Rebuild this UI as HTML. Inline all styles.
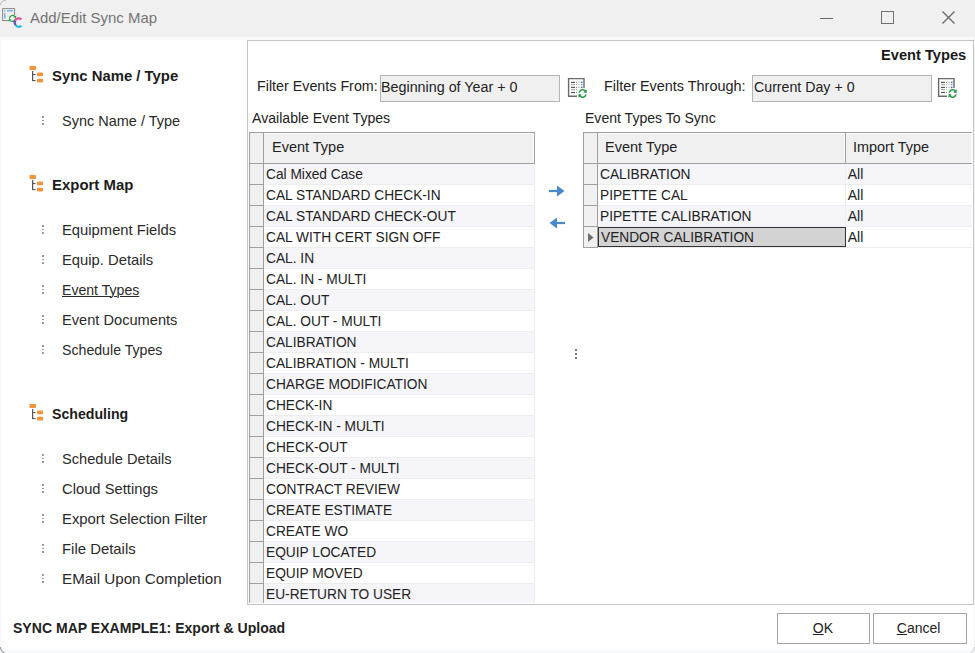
<!DOCTYPE html>
<html><head><meta charset="utf-8">
<style>
*{margin:0;padding:0;box-sizing:border-box}
html,body{width:975px;height:653px;overflow:hidden;background:#fff;font-family:"Liberation Sans",sans-serif;position:relative}
.a{position:absolute;white-space:nowrap}
</style></head><body>
<div class="a" style="left:0;top:0;width:975px;height:37px;background:#f0f0f0"></div>
<div class="a" style="left:0;top:37px;width:975px;height:3px;background:#f8f9fa"></div>
<div class="a" style="left:0;top:37px;width:2px;height:616px;background:#f8f9fa"></div>
<div class="a" style="left:0;top:650px;width:975px;height:3px;background:#f8f9fa"></div>
<div class="a" style="left:974px;top:37px;width:1px;height:616px;background:#f3f4f5"></div>
<svg class="a" style="left:0;top:0" width="10" height="10"><path d="M0.3 5 Q1 1 6 0.3" fill="none" stroke="#b8b8b8" stroke-width="1"/></svg>
<svg class="a" style="left:0;top:646px" width="6" height="7"><path d="M0.3 1 Q1 5.5 4.5 6.8" fill="none" stroke="#9a9a9a" stroke-width="1.2"/></svg>
<svg class="a" style="left:969px;top:646px" width="6" height="7"><path d="M5.7 1 Q5 5.5 1.5 6.8" fill="none" stroke="#c4c4c4" stroke-width="1"/></svg>
<svg class="a" style="left:0;top:0" width="28" height="36" viewBox="0 0 28 36">
 <path d="M9 20.6 H2.6 V8.6 H14.6 V15" fill="none" stroke="#7c7c7c" stroke-width="0.9"/>
 <rect x="4.1" y="10.1" width="1.4" height="1.4" fill="#79aee6"/>
 <rect x="7" y="10.1" width="6" height="1.4" fill="#79aee6"/>
 <rect x="4.1" y="13" width="1.4" height="5.6" fill="#79aee6"/>
 <path d="M9.4 18.6 A3.1 3.1 0 0 1 14.9 16.6" fill="none" stroke="#1f9d3d" stroke-width="1.1"/>
 <path d="M16.4 15.4 L15.9 18.6 L13.6 17.0 Z" fill="#1f9d3d"/>
 <path d="M15.4 18.6 A3.1 3.1 0 0 1 10.3 20.6" fill="none" stroke="#1f9d3d" stroke-width="1.1"/>
 <path d="M8.6 21.6 L9.0 18.6 L11.3 20.0 Z" fill="#1f9d3d"/>
 <path d="M21.4 19.4 A3.9 3.9 0 0 0 15.22 20.65" fill="none" stroke="#e3529b" stroke-width="2.2"/>
 <path d="M15.22 20.65 A3.9 3.9 0 0 0 15.61 25.1" fill="none" stroke="#6b4bb0" stroke-width="2.2"/>
 <path d="M15.61 25.1 A3.9 3.9 0 0 0 21.4 25.8" fill="none" stroke="#22b9e0" stroke-width="2.2"/>
</svg>
<div class="a" style="left:29.50px;top:10.04px;font-size:15px;line-height:15px;font-weight:400;color:#747474;transform:scaleX(0.9959);transform-origin:0 0;">Add/Edit Sync Map</div>
<div class="a" style="left:820px;top:18px;width:13px;height:1px;background:#6a6a6a"></div>
<div class="a" style="left:881px;top:11px;width:13px;height:13px;border:1px solid #707070"></div>
<svg class="a" style="left:941px;top:10px" width="16" height="16" viewBox="0 0 16 16"><path d="M1.5 1.5 L13.5 13.5 M13.5 1.5 L1.5 13.5" stroke="#6a6a6a" stroke-width="1.4"/></svg>
<svg class="a" style="left:29px;top:66px" width="15" height="17" viewBox="0 0 15 17"><rect x="0.5" y="0" width="6.5" height="4" rx="0.8" fill="#f2943a"/><rect x="3" y="5" width="1.2" height="10" fill="#55555f"/><rect x="3" y="8" width="3.5" height="1.1" fill="#55555f"/><rect x="3" y="14" width="3.5" height="1.1" fill="#55555f"/><rect x="8" y="6.5" width="6" height="3.7" rx="0.8" fill="#f2943a"/><rect x="8" y="12.7" width="6" height="3.7" rx="0.8" fill="#f2943a"/></svg>
<div class="a" style="left:52.20px;top:68.14px;font-size:15px;line-height:15px;font-weight:700;color:#1c1c1c;transform:scaleX(0.9915);transform-origin:0 0;">Sync Name / Type</div>
<svg class="a" style="left:29px;top:175px" width="15" height="17" viewBox="0 0 15 17"><rect x="0.5" y="0" width="6.5" height="4" rx="0.8" fill="#f2943a"/><rect x="3" y="5" width="1.2" height="10" fill="#55555f"/><rect x="3" y="8" width="3.5" height="1.1" fill="#55555f"/><rect x="3" y="14" width="3.5" height="1.1" fill="#55555f"/><rect x="8" y="6.5" width="6" height="3.7" rx="0.8" fill="#f2943a"/><rect x="8" y="12.7" width="6" height="3.7" rx="0.8" fill="#f2943a"/></svg>
<div class="a" style="left:51.60px;top:177.24px;font-size:15px;line-height:15px;font-weight:700;color:#1c1c1c;transform:scaleX(0.9955);transform-origin:0 0;">Export Map</div>
<svg class="a" style="left:29px;top:404px" width="15" height="17" viewBox="0 0 15 17"><rect x="0.5" y="0" width="6.5" height="4" rx="0.8" fill="#f2943a"/><rect x="3" y="5" width="1.2" height="10" fill="#55555f"/><rect x="3" y="8" width="3.5" height="1.1" fill="#55555f"/><rect x="3" y="14" width="3.5" height="1.1" fill="#55555f"/><rect x="8" y="6.5" width="6" height="3.7" rx="0.8" fill="#f2943a"/><rect x="8" y="12.7" width="6" height="3.7" rx="0.8" fill="#f2943a"/></svg>
<div class="a" style="left:52.22px;top:406.34px;font-size:15px;line-height:15px;font-weight:700;color:#1c1c1c;transform:scaleX(0.9419);transform-origin:0 0;">Scheduling</div>
<div class="a" style="left:42px;top:116px;width:1.7px;height:1.6px;background:#9c9c9c"></div>
<div class="a" style="left:42px;top:119.5px;width:1.7px;height:1.6px;background:#9c9c9c"></div>
<div class="a" style="left:42px;top:123px;width:1.7px;height:1.6px;background:#9c9c9c"></div>
<div class="a" style="left:62.22px;top:113.44px;font-size:15px;line-height:15px;font-weight:400;color:#2a2a2a;transform:scaleX(0.9662);transform-origin:0 0;">Sync Name / Type</div>
<div class="a" style="left:42px;top:225px;width:1.7px;height:1.6px;background:#9c9c9c"></div>
<div class="a" style="left:42px;top:228.5px;width:1.7px;height:1.6px;background:#9c9c9c"></div>
<div class="a" style="left:42px;top:232px;width:1.7px;height:1.6px;background:#9c9c9c"></div>
<div class="a" style="left:61.62px;top:222.24px;font-size:15px;line-height:15px;font-weight:400;color:#2a2a2a;transform:scaleX(0.9856);transform-origin:0 0;">Equipment Fields</div>
<div class="a" style="left:42px;top:255px;width:1.7px;height:1.6px;background:#9c9c9c"></div>
<div class="a" style="left:42px;top:258.5px;width:1.7px;height:1.6px;background:#9c9c9c"></div>
<div class="a" style="left:42px;top:262px;width:1.7px;height:1.6px;background:#9c9c9c"></div>
<div class="a" style="left:61.62px;top:252.24px;font-size:15px;line-height:15px;font-weight:400;color:#2a2a2a;transform:scaleX(0.9857);transform-origin:0 0;">Equip. Details</div>
<div class="a" style="left:42px;top:285px;width:1.7px;height:1.6px;background:#9c9c9c"></div>
<div class="a" style="left:42px;top:288.5px;width:1.7px;height:1.6px;background:#9c9c9c"></div>
<div class="a" style="left:42px;top:292px;width:1.7px;height:1.6px;background:#9c9c9c"></div>
<div class="a" style="left:61.67px;top:282.24px;font-size:15px;line-height:15px;font-weight:400;color:#2a2a2a;transform:scaleX(0.9395);transform-origin:0 0;"><span style="text-decoration:underline;text-decoration-thickness:1px;text-underline-offset:1px">Event Types</span></div>
<div class="a" style="left:42px;top:315px;width:1.7px;height:1.6px;background:#9c9c9c"></div>
<div class="a" style="left:42px;top:318.5px;width:1.7px;height:1.6px;background:#9c9c9c"></div>
<div class="a" style="left:42px;top:322px;width:1.7px;height:1.6px;background:#9c9c9c"></div>
<div class="a" style="left:61.63px;top:312.24px;font-size:15px;line-height:15px;font-weight:400;color:#2a2a2a;transform:scaleX(0.9748);transform-origin:0 0;">Event Documents</div>
<div class="a" style="left:42px;top:345px;width:1.7px;height:1.6px;background:#9c9c9c"></div>
<div class="a" style="left:42px;top:348.5px;width:1.7px;height:1.6px;background:#9c9c9c"></div>
<div class="a" style="left:42px;top:352px;width:1.7px;height:1.6px;background:#9c9c9c"></div>
<div class="a" style="left:62.23px;top:342.24px;font-size:15px;line-height:15px;font-weight:400;color:#2a2a2a;transform:scaleX(0.9434);transform-origin:0 0;">Schedule Types</div>
<div class="a" style="left:42px;top:454px;width:1.7px;height:1.6px;background:#9c9c9c"></div>
<div class="a" style="left:42px;top:457.5px;width:1.7px;height:1.6px;background:#9c9c9c"></div>
<div class="a" style="left:42px;top:461px;width:1.7px;height:1.6px;background:#9c9c9c"></div>
<div class="a" style="left:62.22px;top:451.24px;font-size:15px;line-height:15px;font-weight:400;color:#2a2a2a;transform:scaleX(0.9739);transform-origin:0 0;">Schedule Details</div>
<div class="a" style="left:42px;top:484px;width:1.7px;height:1.6px;background:#9c9c9c"></div>
<div class="a" style="left:42px;top:487.5px;width:1.7px;height:1.6px;background:#9c9c9c"></div>
<div class="a" style="left:42px;top:491px;width:1.7px;height:1.6px;background:#9c9c9c"></div>
<div class="a" style="left:62.06px;top:481.24px;font-size:15px;line-height:15px;font-weight:400;color:#2a2a2a;transform:scaleX(0.9838);transform-origin:0 0;">Cloud Settings</div>
<div class="a" style="left:42px;top:514px;width:1.7px;height:1.6px;background:#9c9c9c"></div>
<div class="a" style="left:42px;top:517.5px;width:1.7px;height:1.6px;background:#9c9c9c"></div>
<div class="a" style="left:42px;top:521px;width:1.7px;height:1.6px;background:#9c9c9c"></div>
<div class="a" style="left:61.61px;top:511.24px;font-size:15px;line-height:15px;font-weight:400;color:#2a2a2a;transform:scaleX(0.9895);transform-origin:0 0;">Export Selection Filter</div>
<div class="a" style="left:42px;top:544px;width:1.7px;height:1.6px;background:#9c9c9c"></div>
<div class="a" style="left:42px;top:547.5px;width:1.7px;height:1.6px;background:#9c9c9c"></div>
<div class="a" style="left:42px;top:551px;width:1.7px;height:1.6px;background:#9c9c9c"></div>
<div class="a" style="left:61.61px;top:541.24px;font-size:15px;line-height:15px;font-weight:400;color:#2a2a2a;transform:scaleX(0.9926);transform-origin:0 0;">File Details</div>
<div class="a" style="left:42px;top:574px;width:1.7px;height:1.6px;background:#9c9c9c"></div>
<div class="a" style="left:42px;top:577.5px;width:1.7px;height:1.6px;background:#9c9c9c"></div>
<div class="a" style="left:42px;top:581px;width:1.7px;height:1.6px;background:#9c9c9c"></div>
<div class="a" style="left:61.58px;top:571.24px;font-size:15px;line-height:15px;font-weight:400;color:#2a2a2a;transform:scaleX(1.0133);transform-origin:0 0;">EMail Upon Completion</div>
<div class="a" style="left:247px;top:40px;width:727px;height:565px;border:1px solid #c6c6c6;background:#fff"></div>
<div class="a" style="left:880.92px;top:47.57px;font-size:14px;line-height:14px;font-weight:700;color:#1a1a1a;transform:scaleX(1.0463);transform-origin:0 0;">Event Types</div>
<div class="a" style="left:256.56px;top:79.27px;font-size:14px;line-height:14px;font-weight:400;color:#222;transform:scaleX(1.0208);transform-origin:0 0;">Filter Events From:</div>
<div class="a" style="left:380px;top:75px;width:180px;height:27px;border:1px solid #b4b4b4;background:#f0f0f0"></div>
<div class="a" style="left:381.15px;top:79.87px;font-size:14px;line-height:14px;font-weight:400;color:#222;transform:scaleX(1.0225);transform-origin:0 0;">Beginning of Year + 0</div>
<div class="a" style="left:604.05px;top:79.27px;font-size:14px;line-height:14px;font-weight:400;color:#222;transform:scaleX(1.0290);transform-origin:0 0;">Filter Events Through:</div>
<div class="a" style="left:752px;top:75px;width:180px;height:27px;border:1px solid #b4b4b4;background:#f0f0f0"></div>
<div class="a" style="left:753.59px;top:79.87px;font-size:14px;line-height:14px;font-weight:400;color:#222;transform:scaleX(1.0132);transform-origin:0 0;">Current Day + 0</div>
<svg class="a" style="left:564px;top:74px" width="28" height="28" viewBox="0 0 28 28"><path d="M13 22.2 H4.6 V4.6 H20 V14" fill="none" stroke="#6a6a6a" stroke-width="1.4"/><rect x="7" y="7.8" width="4" height="1.2" fill="#555"/><rect x="7" y="10" width="4" height="1.2" fill="#aaa"/><rect x="7" y="12.8" width="4" height="1.2" fill="#555"/><rect x="7" y="15" width="4" height="1.2" fill="#aaa"/><rect x="7" y="17.9" width="4" height="1.2" fill="#555"/><rect x="12" y="7.8" width="1" height="1.2" fill="#888"/><rect x="12" y="10" width="1" height="1.2" fill="#bbb"/><rect x="12" y="12.8" width="1" height="1.2" fill="#888"/><rect x="12" y="15" width="1" height="1.2" fill="#bbb"/><rect x="12" y="17.9" width="1" height="1.2" fill="#888"/><rect x="14" y="7.8" width="2.5" height="1.2" fill="#ccc"/><rect x="14" y="10" width="2.5" height="1.2" fill="#ddd"/><rect x="14" y="12.8" width="2.5" height="1.2" fill="#ccc"/><rect x="17" y="7.6" width="1.5" height="1.5" fill="#3a7bd5"/><rect x="17" y="9.9" width="1.5" height="1.5" fill="#7aa5e0"/><rect x="17" y="12.6" width="1.5" height="1.5" fill="#3a7bd5"/><path d="M15.2 18.6 A3.6 3.6 0 0 1 21.6 17.2" fill="none" stroke="#2e9a48" stroke-width="1.6"/><path d="M22.8 15.2 L22.6 19.2 L19.2 18.2 Z" fill="#2e9a48"/><path d="M22 20.4 A3.6 3.6 0 0 1 15.6 21.8" fill="none" stroke="#2e9a48" stroke-width="1.6"/><path d="M14.4 23.8 L14.6 19.8 L18 20.8 Z" fill="#2e9a48"/></svg>
<svg class="a" style="left:934px;top:74px" width="28" height="28" viewBox="0 0 28 28"><path d="M13 22.2 H4.6 V4.6 H20 V14" fill="none" stroke="#6a6a6a" stroke-width="1.4"/><rect x="7" y="7.8" width="4" height="1.2" fill="#555"/><rect x="7" y="10" width="4" height="1.2" fill="#aaa"/><rect x="7" y="12.8" width="4" height="1.2" fill="#555"/><rect x="7" y="15" width="4" height="1.2" fill="#aaa"/><rect x="7" y="17.9" width="4" height="1.2" fill="#555"/><rect x="12" y="7.8" width="1" height="1.2" fill="#888"/><rect x="12" y="10" width="1" height="1.2" fill="#bbb"/><rect x="12" y="12.8" width="1" height="1.2" fill="#888"/><rect x="12" y="15" width="1" height="1.2" fill="#bbb"/><rect x="12" y="17.9" width="1" height="1.2" fill="#888"/><rect x="14" y="7.8" width="2.5" height="1.2" fill="#ccc"/><rect x="14" y="10" width="2.5" height="1.2" fill="#ddd"/><rect x="14" y="12.8" width="2.5" height="1.2" fill="#ccc"/><rect x="17" y="7.6" width="1.5" height="1.5" fill="#3a7bd5"/><rect x="17" y="9.9" width="1.5" height="1.5" fill="#7aa5e0"/><rect x="17" y="12.6" width="1.5" height="1.5" fill="#3a7bd5"/><path d="M15.2 18.6 A3.6 3.6 0 0 1 21.6 17.2" fill="none" stroke="#2e9a48" stroke-width="1.6"/><path d="M22.8 15.2 L22.6 19.2 L19.2 18.2 Z" fill="#2e9a48"/><path d="M22 20.4 A3.6 3.6 0 0 1 15.6 21.8" fill="none" stroke="#2e9a48" stroke-width="1.6"/><path d="M14.4 23.8 L14.6 19.8 L18 20.8 Z" fill="#2e9a48"/></svg>
<div class="a" style="left:252.30px;top:111.17px;font-size:14px;line-height:14px;font-weight:400;color:#222;transform:scaleX(1.0068);transform-origin:0 0;">Available Event Types</div>
<div class="a" style="left:585.48px;top:111.37px;font-size:14px;line-height:14px;font-weight:400;color:#222;transform:scaleX(1.0036);transform-origin:0 0;">Event Types To Sync</div>
<div class="a" style="left:248px;top:41px;width:725px;height:562px;overflow:hidden">
<div class="a" style="left:16px;top:123px;width:271px;height:21px;background:#f5f5fa;border-right:1px solid #ededf0;border-bottom:1px solid #ededf0"></div>
<div class="a" style="left:1px;top:122px;width:15px;height:22px;background:#f0f0f0;border:1px solid #a0a0a0;border-top:1px solid #a0a0a0"></div>
<div class="a" style="left:16px;top:144px;width:271px;height:21px;background:#fff;border-right:1px solid #ededf0;border-bottom:1px solid #ededf0"></div>
<div class="a" style="left:1px;top:143px;width:15px;height:22px;background:#f0f0f0;border:1px solid #a0a0a0;border-top:1px solid #a0a0a0"></div>
<div class="a" style="left:16px;top:165px;width:271px;height:21px;background:#f5f5fa;border-right:1px solid #ededf0;border-bottom:1px solid #ededf0"></div>
<div class="a" style="left:1px;top:164px;width:15px;height:22px;background:#f0f0f0;border:1px solid #a0a0a0;border-top:1px solid #a0a0a0"></div>
<div class="a" style="left:16px;top:186px;width:271px;height:21px;background:#fff;border-right:1px solid #ededf0;border-bottom:1px solid #ededf0"></div>
<div class="a" style="left:1px;top:185px;width:15px;height:22px;background:#f0f0f0;border:1px solid #a0a0a0;border-top:1px solid #a0a0a0"></div>
<div class="a" style="left:16px;top:207px;width:271px;height:21px;background:#f5f5fa;border-right:1px solid #ededf0;border-bottom:1px solid #ededf0"></div>
<div class="a" style="left:1px;top:206px;width:15px;height:22px;background:#f0f0f0;border:1px solid #a0a0a0;border-top:1px solid #a0a0a0"></div>
<div class="a" style="left:16px;top:228px;width:271px;height:21px;background:#fff;border-right:1px solid #ededf0;border-bottom:1px solid #ededf0"></div>
<div class="a" style="left:1px;top:227px;width:15px;height:22px;background:#f0f0f0;border:1px solid #a0a0a0;border-top:1px solid #a0a0a0"></div>
<div class="a" style="left:16px;top:249px;width:271px;height:21px;background:#f5f5fa;border-right:1px solid #ededf0;border-bottom:1px solid #ededf0"></div>
<div class="a" style="left:1px;top:248px;width:15px;height:22px;background:#f0f0f0;border:1px solid #a0a0a0;border-top:1px solid #a0a0a0"></div>
<div class="a" style="left:16px;top:270px;width:271px;height:21px;background:#fff;border-right:1px solid #ededf0;border-bottom:1px solid #ededf0"></div>
<div class="a" style="left:1px;top:269px;width:15px;height:22px;background:#f0f0f0;border:1px solid #a0a0a0;border-top:1px solid #a0a0a0"></div>
<div class="a" style="left:16px;top:291px;width:271px;height:21px;background:#f5f5fa;border-right:1px solid #ededf0;border-bottom:1px solid #ededf0"></div>
<div class="a" style="left:1px;top:290px;width:15px;height:22px;background:#f0f0f0;border:1px solid #a0a0a0;border-top:1px solid #a0a0a0"></div>
<div class="a" style="left:16px;top:312px;width:271px;height:21px;background:#fff;border-right:1px solid #ededf0;border-bottom:1px solid #ededf0"></div>
<div class="a" style="left:1px;top:311px;width:15px;height:22px;background:#f0f0f0;border:1px solid #a0a0a0;border-top:1px solid #a0a0a0"></div>
<div class="a" style="left:16px;top:333px;width:271px;height:21px;background:#f5f5fa;border-right:1px solid #ededf0;border-bottom:1px solid #ededf0"></div>
<div class="a" style="left:1px;top:332px;width:15px;height:22px;background:#f0f0f0;border:1px solid #a0a0a0;border-top:1px solid #a0a0a0"></div>
<div class="a" style="left:16px;top:354px;width:271px;height:21px;background:#fff;border-right:1px solid #ededf0;border-bottom:1px solid #ededf0"></div>
<div class="a" style="left:1px;top:353px;width:15px;height:22px;background:#f0f0f0;border:1px solid #a0a0a0;border-top:1px solid #a0a0a0"></div>
<div class="a" style="left:16px;top:375px;width:271px;height:21px;background:#f5f5fa;border-right:1px solid #ededf0;border-bottom:1px solid #ededf0"></div>
<div class="a" style="left:1px;top:374px;width:15px;height:22px;background:#f0f0f0;border:1px solid #a0a0a0;border-top:1px solid #a0a0a0"></div>
<div class="a" style="left:16px;top:396px;width:271px;height:21px;background:#fff;border-right:1px solid #ededf0;border-bottom:1px solid #ededf0"></div>
<div class="a" style="left:1px;top:395px;width:15px;height:22px;background:#f0f0f0;border:1px solid #a0a0a0;border-top:1px solid #a0a0a0"></div>
<div class="a" style="left:16px;top:417px;width:271px;height:21px;background:#f5f5fa;border-right:1px solid #ededf0;border-bottom:1px solid #ededf0"></div>
<div class="a" style="left:1px;top:416px;width:15px;height:22px;background:#f0f0f0;border:1px solid #a0a0a0;border-top:1px solid #a0a0a0"></div>
<div class="a" style="left:16px;top:438px;width:271px;height:21px;background:#fff;border-right:1px solid #ededf0;border-bottom:1px solid #ededf0"></div>
<div class="a" style="left:1px;top:437px;width:15px;height:22px;background:#f0f0f0;border:1px solid #a0a0a0;border-top:1px solid #a0a0a0"></div>
<div class="a" style="left:16px;top:459px;width:271px;height:21px;background:#f5f5fa;border-right:1px solid #ededf0;border-bottom:1px solid #ededf0"></div>
<div class="a" style="left:1px;top:458px;width:15px;height:22px;background:#f0f0f0;border:1px solid #a0a0a0;border-top:1px solid #a0a0a0"></div>
<div class="a" style="left:16px;top:480px;width:271px;height:21px;background:#fff;border-right:1px solid #ededf0;border-bottom:1px solid #ededf0"></div>
<div class="a" style="left:1px;top:479px;width:15px;height:22px;background:#f0f0f0;border:1px solid #a0a0a0;border-top:1px solid #a0a0a0"></div>
<div class="a" style="left:16px;top:501px;width:271px;height:21px;background:#f5f5fa;border-right:1px solid #ededf0;border-bottom:1px solid #ededf0"></div>
<div class="a" style="left:1px;top:500px;width:15px;height:22px;background:#f0f0f0;border:1px solid #a0a0a0;border-top:1px solid #a0a0a0"></div>
<div class="a" style="left:16px;top:522px;width:271px;height:21px;background:#fff;border-right:1px solid #ededf0;border-bottom:1px solid #ededf0"></div>
<div class="a" style="left:1px;top:521px;width:15px;height:22px;background:#f0f0f0;border:1px solid #a0a0a0;border-top:1px solid #a0a0a0"></div>
<div class="a" style="left:16px;top:543px;width:271px;height:21px;background:#f5f5fa;border-right:1px solid #ededf0;border-bottom:1px solid #ededf0"></div>
<div class="a" style="left:1px;top:542px;width:15px;height:22px;background:#f0f0f0;border:1px solid #a0a0a0;border-top:1px solid #a0a0a0"></div>
</div>
<div class="a" style="left:249px;top:132px;width:15px;height:32px;background:#f0f0f0;border:1px solid #a0a0a0"></div>
<div class="a" style="left:263px;top:132px;width:272px;height:32px;background:#f0f0f0;border:1px solid #a0a0a0;box-shadow:inset -1px 1px 0 #fafafa"></div>
<div class="a" style="left:271.54px;top:140.47px;font-size:14px;line-height:14px;font-weight:400;color:#222;transform:scaleX(1.0349);transform-origin:0 0;">Event Type</div>
<div class="a" style="left:266.11px;top:167.27px;font-size:14px;line-height:14px;font-weight:400;color:#222;transform:scaleX(0.9800);transform-origin:0 0;">Cal Mixed Case</div>
<div class="a" style="left:266.11px;top:188.27px;font-size:14px;line-height:14px;font-weight:400;color:#222;transform:scaleX(0.9800);transform-origin:0 0;">CAL STANDARD CHECK-IN</div>
<div class="a" style="left:266.11px;top:209.27px;font-size:14px;line-height:14px;font-weight:400;color:#222;transform:scaleX(0.9800);transform-origin:0 0;">CAL STANDARD CHECK-OUT</div>
<div class="a" style="left:266.11px;top:230.27px;font-size:14px;line-height:14px;font-weight:400;color:#222;transform:scaleX(0.9800);transform-origin:0 0;">CAL WITH CERT SIGN OFF</div>
<div class="a" style="left:266.11px;top:251.27px;font-size:14px;line-height:14px;font-weight:400;color:#222;transform:scaleX(0.9800);transform-origin:0 0;">CAL. IN</div>
<div class="a" style="left:266.11px;top:272.27px;font-size:14px;line-height:14px;font-weight:400;color:#222;transform:scaleX(0.9800);transform-origin:0 0;">CAL. IN - MULTI</div>
<div class="a" style="left:266.11px;top:293.27px;font-size:14px;line-height:14px;font-weight:400;color:#222;transform:scaleX(0.9800);transform-origin:0 0;">CAL. OUT</div>
<div class="a" style="left:266.11px;top:314.27px;font-size:14px;line-height:14px;font-weight:400;color:#222;transform:scaleX(0.9800);transform-origin:0 0;">CAL. OUT - MULTI</div>
<div class="a" style="left:266.11px;top:335.27px;font-size:14px;line-height:14px;font-weight:400;color:#222;transform:scaleX(0.9800);transform-origin:0 0;">CALIBRATION</div>
<div class="a" style="left:266.11px;top:356.27px;font-size:14px;line-height:14px;font-weight:400;color:#222;transform:scaleX(0.9800);transform-origin:0 0;">CALIBRATION - MULTI</div>
<div class="a" style="left:266.11px;top:377.27px;font-size:14px;line-height:14px;font-weight:400;color:#222;transform:scaleX(0.9800);transform-origin:0 0;">CHARGE MODIFICATION</div>
<div class="a" style="left:266.11px;top:398.27px;font-size:14px;line-height:14px;font-weight:400;color:#222;transform:scaleX(0.9800);transform-origin:0 0;">CHECK-IN</div>
<div class="a" style="left:266.11px;top:419.27px;font-size:14px;line-height:14px;font-weight:400;color:#222;transform:scaleX(0.9800);transform-origin:0 0;">CHECK-IN - MULTI</div>
<div class="a" style="left:266.11px;top:440.27px;font-size:14px;line-height:14px;font-weight:400;color:#222;transform:scaleX(0.9800);transform-origin:0 0;">CHECK-OUT</div>
<div class="a" style="left:266.11px;top:461.27px;font-size:14px;line-height:14px;font-weight:400;color:#222;transform:scaleX(0.9800);transform-origin:0 0;">CHECK-OUT - MULTI</div>
<div class="a" style="left:266.11px;top:482.27px;font-size:14px;line-height:14px;font-weight:400;color:#222;transform:scaleX(0.9800);transform-origin:0 0;">CONTRACT REVIEW</div>
<div class="a" style="left:266.11px;top:503.27px;font-size:14px;line-height:14px;font-weight:400;color:#222;transform:scaleX(0.9800);transform-origin:0 0;">CREATE ESTIMATE</div>
<div class="a" style="left:266.11px;top:524.27px;font-size:14px;line-height:14px;font-weight:400;color:#222;transform:scaleX(0.9800);transform-origin:0 0;">CREATE WO</div>
<div class="a" style="left:265.70px;top:545.27px;font-size:14px;line-height:14px;font-weight:400;color:#222;transform:scaleX(0.9800);transform-origin:0 0;">EQUIP LOCATED</div>
<div class="a" style="left:265.70px;top:566.27px;font-size:14px;line-height:14px;font-weight:400;color:#222;transform:scaleX(0.9800);transform-origin:0 0;">EQUIP MOVED</div>
<div class="a" style="left:265.70px;top:587.27px;font-size:14px;line-height:14px;font-weight:400;color:#222;transform:scaleX(0.9800);transform-origin:0 0;">EU-RETURN TO USER</div>
<div class="a" style="left:598px;top:164px;width:248px;height:21px;background:#f5f5fa;border-right:1px solid #ededf0;border-bottom:1px solid #ededf0"></div>
<div class="a" style="left:846px;top:164px;width:126px;height:21px;background:#f5f5fa;border-bottom:1px solid #ededf0"></div>
<div class="a" style="left:583px;top:163px;width:15px;height:22px;background:#f0f0f0;border:1px solid #a0a0a0"></div>
<div class="a" style="left:598px;top:185px;width:248px;height:21px;background:#fff;border-right:1px solid #ededf0;border-bottom:1px solid #ededf0"></div>
<div class="a" style="left:846px;top:185px;width:126px;height:21px;background:#fff;border-bottom:1px solid #ededf0"></div>
<div class="a" style="left:583px;top:184px;width:15px;height:22px;background:#f0f0f0;border:1px solid #a0a0a0"></div>
<div class="a" style="left:598px;top:206px;width:248px;height:21px;background:#f5f5fa;border-right:1px solid #ededf0;border-bottom:1px solid #ededf0"></div>
<div class="a" style="left:846px;top:206px;width:126px;height:21px;background:#f5f5fa;border-bottom:1px solid #ededf0"></div>
<div class="a" style="left:583px;top:205px;width:15px;height:22px;background:#f0f0f0;border:1px solid #a0a0a0"></div>
<div class="a" style="left:598px;top:227px;width:248px;height:21px;background:#fff;border-right:1px solid #ededf0;border-bottom:1px solid #ededf0"></div>
<div class="a" style="left:846px;top:227px;width:126px;height:21px;background:#fff;border-bottom:1px solid #ededf0"></div>
<div class="a" style="left:583px;top:226px;width:15px;height:22px;background:#f0f0f0;border:1px solid #a0a0a0"></div>
<div class="a" style="left:598px;top:227px;width:248px;height:20px;background:#d3d3d3;border:1px solid #333"></div>
<svg class="a" style="left:584px;top:228px" width="14" height="18" viewBox="0 0 14 18"><path d="M4 5 L9.5 9.5 L4 14 Z" fill="#6e6e6e"/></svg>
<div class="a" style="left:583px;top:132px;width:15px;height:32px;background:#f0f0f0;border:1px solid #a0a0a0"></div>
<div class="a" style="left:597px;top:132px;width:249px;height:32px;background:#f0f0f0;border:1px solid #a0a0a0;box-shadow:inset -1px 1px 0 #fafafa"></div>
<div class="a" style="left:845px;top:132px;width:127px;height:32px;background:#f0f0f0;border-top:1px solid #a0a0a0;border-bottom:1px solid #a0a0a0;border-left:1px solid #a0a0a0;box-shadow:inset -1px 1px 0 #fafafa"></div>
<div class="a" style="left:605.14px;top:140.47px;font-size:14px;line-height:14px;font-weight:400;color:#222;transform:scaleX(1.0378);transform-origin:0 0;">Event Type</div>
<div class="a" style="left:853.00px;top:140.47px;font-size:14px;line-height:14px;font-weight:400;color:#222;transform:scaleX(1.0312);transform-origin:0 0;">Import Type</div>
<div class="a" style="left:600.01px;top:167.27px;font-size:14px;line-height:14px;font-weight:400;color:#222;transform:scaleX(0.9800);transform-origin:0 0;">CALIBRATION</div>
<div class="a" style="left:847.70px;top:167.27px;font-size:14px;line-height:14px;font-weight:400;color:#222;">All</div>
<div class="a" style="left:599.60px;top:188.27px;font-size:14px;line-height:14px;font-weight:400;color:#222;transform:scaleX(0.9800);transform-origin:0 0;">PIPETTE CAL</div>
<div class="a" style="left:847.70px;top:188.27px;font-size:14px;line-height:14px;font-weight:400;color:#222;">All</div>
<div class="a" style="left:599.60px;top:209.27px;font-size:14px;line-height:14px;font-weight:400;color:#222;transform:scaleX(0.9800);transform-origin:0 0;">PIPETTE CALIBRATION</div>
<div class="a" style="left:847.70px;top:209.27px;font-size:14px;line-height:14px;font-weight:400;color:#222;">All</div>
<div class="a" style="left:600.70px;top:230.27px;font-size:14px;line-height:14px;font-weight:400;color:#222;transform:scaleX(0.9800);transform-origin:0 0;">VENDOR CALIBRATION</div>
<div class="a" style="left:847.70px;top:230.27px;font-size:14px;line-height:14px;font-weight:400;color:#222;">All</div>
<svg class="a" style="left:546px;top:182px" width="22" height="50" viewBox="0 0 22 50"><path d="M3 9 H13" stroke="#4a88c8" stroke-width="2.2"/><path d="M11 3.5 L18.5 9 L11 14.5 Z" fill="#4a88c8"/><path d="M8 41 H19" stroke="#4a88c8" stroke-width="2.2"/><path d="M11 35.5 L3.5 41 L11 46.5 Z" fill="#4a88c8"/></svg>
<div class="a" style="left:575px;top:348.5px;width:2.2px;height:2.2px;border-radius:50%;background:#555"></div>
<div class="a" style="left:575px;top:352.5px;width:2.2px;height:2.2px;border-radius:50%;background:#555"></div>
<div class="a" style="left:575px;top:356.5px;width:2.2px;height:2.2px;border-radius:50%;background:#555"></div>
<div class="a" style="left:13.02px;top:621.47px;font-size:14px;line-height:14px;font-weight:700;color:#222;transform:scaleX(1.0036);transform-origin:0 0;">SYNC MAP EXAMPLE1: Export &amp; Upload</div>
<div class="a" style="left:777px;top:613px;width:93px;height:31px;border:1px solid #a6a6a6;background:#fff"></div>
<div class="a" style="left:873px;top:613px;width:94px;height:31px;border:1px solid #a6a6a6;background:#fff"></div>
<div class="a" style="left:812.84px;top:621.17px;font-size:14px;line-height:14px;font-weight:400;color:#222;"><span style="text-decoration:underline;text-decoration-thickness:1px;text-underline-offset:0.5px">O</span>K</div>
<div class="a" style="left:896.80px;top:621.17px;font-size:14px;line-height:14px;font-weight:400;color:#222;"><span style="text-decoration:underline;text-decoration-thickness:1px;text-underline-offset:0.5px">C</span>ancel</div>
</body></html>
